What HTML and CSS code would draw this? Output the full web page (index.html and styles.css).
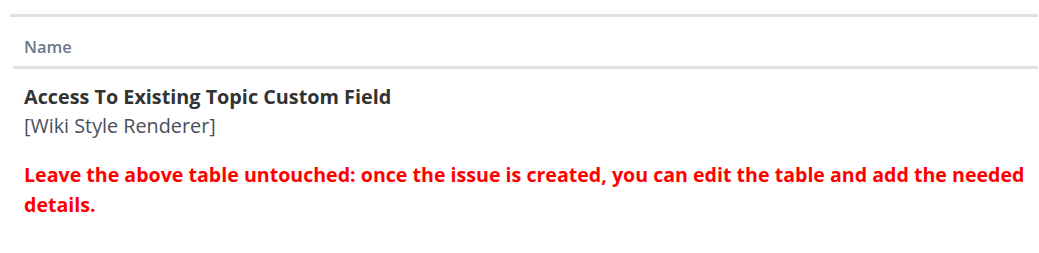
FILE: index.html
```html
<!DOCTYPE html>
<html>
<head>
<meta charset="utf-8">
<link rel="stylesheet" href="styles.css">
</head>
<body>
<div class="page">
  <div class="table">
    <div class="head-row">
      <div class="th">Name</div>
    </div>
    <div class="row">
      <div class="field-name">Access To Existing Topic Custom Field</div>
      <div class="field-type">[Wiki Style Renderer]</div>
    </div>
  </div>
  <p class="warning">Leave the above table untouched: once the issue is created, you can edit the table and add the needed details.</p>
</div>
</body>
</html>
```
FILE: styles.css
```css
html, body {
  margin: 0;
  padding: 0;
  background: #ffffff;
}
.page {
  padding: 14px 1px 0 10px;
  font-family: "Open Sans", "Noto Sans", sans-serif;
  color: #172b4d;
}
.table {
  border-top: 3px solid #dfe1e6;
}
.head-row {
  margin-left: 3px;
  border-bottom: 3px solid #dfe1e6;
  padding: 20px 0 9px 11px;
}
.th {
  font-size: 16.5px;
  font-weight: 600;
  color: #6b778c;
  line-height: 20px;
}
.row {
  padding: 13px 0 0 14px;
}
.field-name {
  font-size: 19.8px;
  font-weight: 700;
  color: #333333;
  line-height: 29px;
}
.field-type {
  font-size: 19.8px;
  color: #4a4f5c;
  line-height: 29px;
}
.warning {
  margin: 20px 0 0 14px;
  font-size: 19.6px;
  font-weight: 700;
  color: #ff0000;
  line-height: 30px;
}
```
